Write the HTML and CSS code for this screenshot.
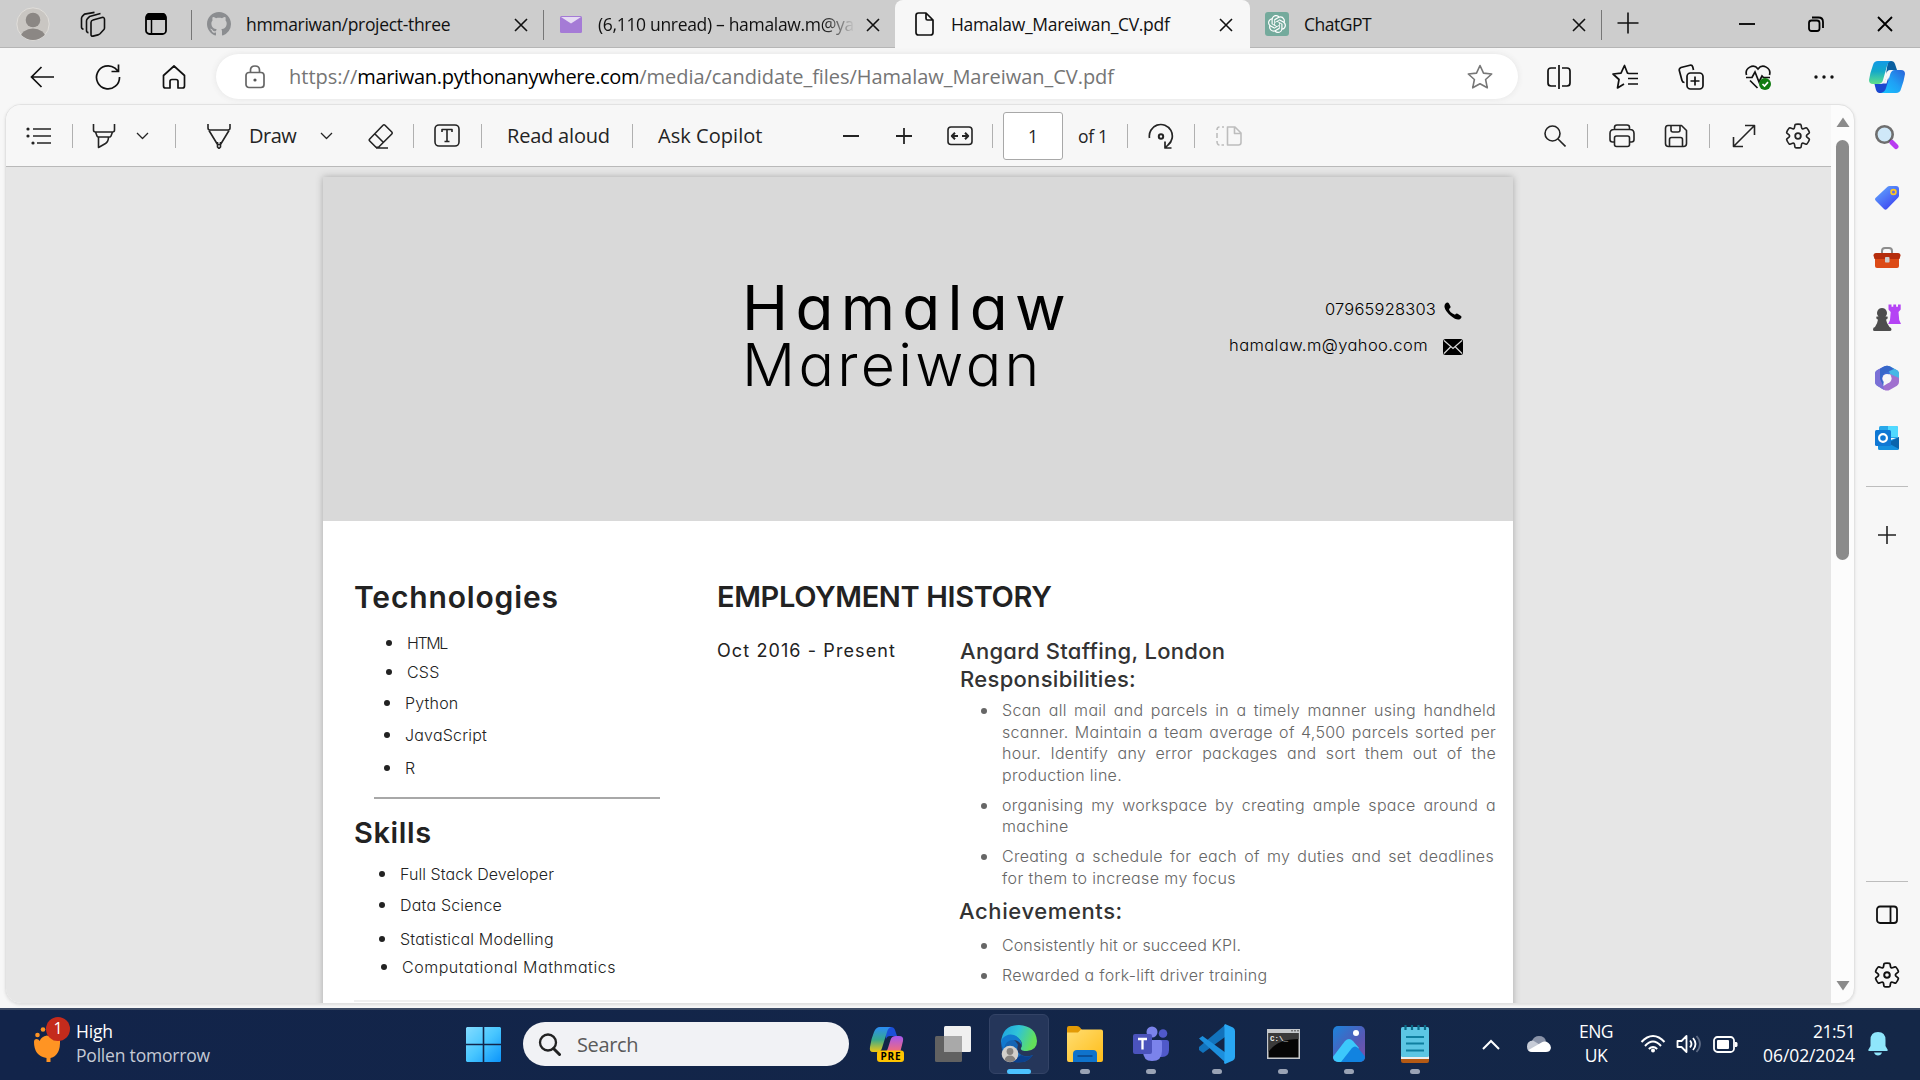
FILE: index.html
```html
<!DOCTYPE html>
<html lang="en">
<head>
<meta charset="utf-8">
<title>Hamalaw_Mareiwan_CV.pdf</title>
<link rel="stylesheet" href="styles.css">
</head>
<body>
<header class="tabstrip">
  <svg class="avatar" width="34" height="34" viewBox="0 0 34 34"><defs><clipPath id="av"><circle cx="17" cy="17" r="16"/></clipPath></defs><circle cx="17" cy="17" r="16.2" fill="#c9c6c2" stroke="#e0deda"/><g clip-path="url(#av)" fill="#8b8784"><circle cx="17" cy="13" r="7.3"/><ellipse cx="17" cy="31" rx="12.5" ry="9.500"/></g></svg>
  <svg class="workspaces" width="26" height="26" viewBox="0 0 26 26" fill="none" stroke="#111" stroke-width="1.6" stroke-linejoin="round"><path d="M13 9l9-2.500q2.500-.5 2.500 2V17q0 1-.8 1.800L20 22.800q-.8.8-2 1.100l-5 1.200q-2 .3-2-1.700V11.500q0-2 2-2.500z"/><path d="M8 21q-2 0-2-2V9.500q0-1.500 1-2.500l2-2 11-3M3 17.500q-2 0-2-2V7q0-1.500 1-2.500l2-2L14 .8" transform="translate(.5 .6)"/></svg>
  <svg class="tabactions" width="22" height="24" viewBox="0 0 22 24"><rect x="1" y="2" width="20" height="20" rx="3.500" fill="none" stroke="#000" stroke-width="1.8"/><path d="M1 8V5q0-4 4-4h12q4 0 4 4v3z"/><path d="M6.500 7v15" stroke="#000" stroke-width="1.5"/></svg>
  <div class="tab tab-sep">
    <span class="tab-icon"><svg width="24" height="24" viewBox="0 0 16 16" fill="#8b8d90"><path d="M8 0C3.580 0 0 3.580 0 8c0 3.540 2.290 6.530 5.470 7.590.4.070.55-.17.55-.38 0-.19-.01-.82-.01-1.490-2.010.37-2.530-.49-2.690-.94-.09-.23-.48-.94-.82-1.130-.28-.15-.68-.52-.01-.53.63-.01 1.080.58 1.230.82.72 1.210 1.870.87 2.330.66.070-.52.28-.87.51-1.070-1.780-.2-3.640-.89-3.640-3.950 0-.87.31-1.590.82-2.150-.08-.2-.36-1.020.08-2.120 0 0 .67-.21 2.200.82.64-.18 1.320-.27 2-.27s1.360.09 2 .27c1.530-1.040 2.200-.82 2.200-.82.44 1.100.16 1.920.08 2.120.51.56.82 1.270.82 2.150 0 3.070-1.870 3.750-3.650 3.950.29.25.54.73.54 1.480 0 1.070-.01 1.930-.01 2.200 0 .21.15.46.55.38A8.010 8.010 0 0 0 16 8c0-4.420-3.580-8-8-8z"/></svg></span>
    <span class="tab-title">hmmariwan/project-three</span>
    <svg class="x" width="14" height="14" viewBox="0 0 14 14"><path d="M1 1l12 12M13 1L1 13"/></svg>
  </div>
  <div class="tab tab-sep">
    <span class="tab-icon"><svg width="22" height="17" viewBox="0 0 22 17"><rect width="22" height="17" rx="1.500" fill="#a57bd6"/><path d="M1 1h20l-10 6.500z" fill="#e6dcf3"/></svg></span>
    <span class="tab-title fade">(6,110 unread) – hamalaw.m@ya</span>
    <svg class="x" width="14" height="14" viewBox="0 0 14 14"><path d="M1 1l12 12M13 1L1 13"/></svg>
  </div>
  <div class="tab tab-active">
    <span class="tab-icon"><svg width="19" height="24" viewBox="0 0 19 24" fill="none" stroke="#111" stroke-width="1.7" stroke-linejoin="round"><path d="M3.500 1H11l7 7v12.500q0 2.500-2.500 2.500h-12Q1 23 1 20.500v-17Q1 1 3.500 1zM11 1v5.500Q11 8 12.500 8H18"/></svg></span>
    <span class="tab-title">Hamalaw_Mareiwan_CV.pdf</span>
    <svg class="x" width="14" height="14" viewBox="0 0 14 14"><path d="M1 1l12 12M13 1L1 13"/></svg>
  </div>
  <div class="tab tab-end">
    <span class="tab-icon"><svg width="24" height="24" viewBox="-4 -4 32 32"><rect x="-4" y="-4" width="32" height="32" rx="4" fill="#74aa9c"/><path fill="#fff" d="M22.2819 9.8211a5.9847 5.9847 0 0 0-.5157-4.9108 6.0462 6.0462 0 0 0-6.5098-2.9A6.0651 6.0651 0 0 0 4.9807 4.1818a5.9847 5.9847 0 0 0-3.9977 2.9 6.0462 6.0462 0 0 0 .7427 7.0966 5.98 5.98 0 0 0 .511 4.9107 6.051 6.051 0 0 0 6.5146 2.9001A5.9847 5.9847 0 0 0 13.2599 24a6.0557 6.0557 0 0 0 5.7718-4.2058 5.9894 5.9894 0 0 0 3.9977-2.9001 6.0557 6.0557 0 0 0-.7475-7.0729zm-9.022 12.6081a4.4755 4.4755 0 0 1-2.8764-1.0408l.1419-.0804 4.7783-2.7582a.7948.7948 0 0 0 .3927-.6813v-6.7369l2.02 1.1686a.071.071 0 0 1 .038.052v5.5826a4.504 4.504 0 0 1-4.4945 4.4944zm-9.6607-4.1254a4.4708 4.4708 0 0 1-.5346-3.0137l.142.0852 4.783 2.7582a.7712.7712 0 0 0 .7806 0l5.8428-3.3685v2.3324a.0804.0804 0 0 1-.0332.0615L9.74 19.9502a4.4992 4.4992 0 0 1-6.1408-1.6464zM2.3408 7.8956a4.485 4.485 0 0 1 2.3655-1.9728V11.6a.7664.7664 0 0 0 .3879.6765l5.8144 3.3543-2.0201 1.1685a.0757.0757 0 0 1-.071 0l-4.8303-2.7865A4.504 4.504 0 0 1 2.3408 7.872zm16.5963 3.8558L13.1038 8.364 15.1192 7.2a.0757.0757 0 0 1 .071 0l4.8303 2.7913a4.4944 4.4944 0 0 1-.6765 8.1042v-5.6772a.79.79 0 0 0-.407-.667zm2.0107-3.0231l-.142-.0852-4.7735-2.7818a.7759.7759 0 0 0-.7854 0L9.409 9.2297V6.8974a.0662.0662 0 0 1 .0284-.0615l4.8303-2.7866a4.4992 4.4992 0 0 1 6.6802 4.66zM8.3065 12.863l-2.02-1.1638a.0804.0804 0 0 1-.038-.0567V6.0742a4.4992 4.4992 0 0 1 7.3757-3.4537l-.142.0805L8.704 5.459a.7948.7948 0 0 0-.3927.6813zm1.0976-2.3654l2.602-1.4998 2.6069 1.4998v2.9994l-2.5974 1.4997-2.6067-1.4997Z"/></svg></span>
    <span class="tab-title chat">ChatGPT</span>
    <svg class="x" width="14" height="14" viewBox="0 0 14 14"><path d="M1 1l12 12M13 1L1 13"/></svg>
  </div>
  <svg class="newtab" width="22" height="22" viewBox="0 0 22 22"><path d="M11 .5v21M.5 11h21" stroke="#111" stroke-width="1.6"/></svg>
  <div class="winbtns">
    <svg width="16" height="16" viewBox="0 0 16 16"><path d="M0 8h16"/></svg>
    <svg width="16" height="16" viewBox="0 0 16 16"><rect x="1" y="4.500" width="10.500" height="10.500" rx="2.500"/><path d="M4 1.500h6.500q4.500 0 4.500 4.500v6"/></svg>
    <svg width="16" height="16" viewBox="0 0 16 16"><path d="M1 1l14 14M15 1L1 15"/></svg>
  </div>
</header>

<nav class="navbar">
  <svg class="nb-back" width="24" height="22" viewBox="0 0 24 22"><path d="M24 11H1.500M11.500 1l-10 10 10 10"/></svg>
  <svg class="nb-reload" width="26" height="26" viewBox="0 0 26 26"><path d="M24.500 13A11.500 11.500 0 1 1 20 4.200L23 7M23.500.5V7.500H16.500"/></svg>
  <svg class="nb-home" width="24" height="24" viewBox="0 0 24 24"><path d="M3.500 23q-2 0-2-2V10.500L12 1l10.500 9.500V21q0 2-2 2H16v-6.500q0-2-2-2h-4q-2 0-2 2V23z" stroke-linejoin="round"/></svg>
  <div class="urlbar">
    <svg class="lock" width="20" height="24" viewBox="0 0 20 24" fill="none" stroke="#666" stroke-width="1.7"><rect x="1" y="7.500" width="18" height="15" rx="3"/><path d="M5.500 7V5q0-4 4.500-4t4.500 4v2"/><circle cx="10" cy="15" r="1.600" fill="#555" stroke="none"/></svg>
    <div class="url"><span class="scheme">https://</span><span class="host">mariwan.pythonanywhere.com</span><span class="path">/media/candidate_files/Hamalaw_Mareiwan_CV.pdf</span></div>
    <svg class="star" width="26" height="26" viewBox="0 0 26 26" fill="none" stroke="#777" stroke-width="1.6" stroke-linejoin="round"><path d="M13 1.500l3.500 7.600 8.200.9-6.100 5.500 1.700 8.300L13 19.700l-7.300 4.100 1.700-8.300L1.300 10l8.200-.9z"/></svg>
  </div>
  <div class="nav-tools">
    <svg width="24" height="24" viewBox="0 0 24 24"><path d="M9 3H4Q1 3 1 6v12q0 3 3 3h5M15 3h5q3 0 3 3v12q0 3-3 3h-5M12 0v24"/></svg>
    <svg width="26" height="26" viewBox="0 0 26 26"><path d="M17 9.500l-1.500-.3L12.500 1.500 9 9.200 1 10l6 5.500L5.500 24l6.500-4M16 9.500h10M16 14.500h10M16 20h10" stroke-linejoin="round"/></svg>
    <svg width="26" height="26" viewBox="0 0 26 26"><rect x="9" y="9" width="16" height="16" rx="3.500"/><path d="M17 12.500v9M12.500 17h9M6.500 18.500q-2 0-2.500-2L1.300 6.500q-.5-2 1.700-3L12 1.200q2-.5 2.700 1.500l.8 3.300"/></svg>
    <svg width="26" height="26" viewBox="0 0 26 26"><path d="M1.500 11C-.5 4 8.500-1 13 5c4.500-6 13.500-1 11.500 6M1 13.500h6l3-5.500 4 10 3-6 1.500 1.500H25M5 16.500l7.500 7.500"/><circle cx="20" cy="20" r="6" fill="#107c10" stroke="none"/><path d="M17.500 20l2 2 3.500-3.800" stroke="#fff"/></svg>
    <svg width="26" height="26" viewBox="0 0 26 26" class="dots"><circle cx="5" cy="13" r="1.700"/><circle cx="13" cy="13" r="1.700"/><circle cx="21" cy="13" r="1.700"/></svg>
  </div>
  <svg class="copilot" width="36" height="34" viewBox="0 0 36 34"><defs><linearGradient id="c1" x1="0" y1="0" x2="0" y2="1"><stop offset="0" stop-color="#1299e6"/><stop offset=".45" stop-color="#14a9c9"/><stop offset="1" stop-color="#5fe08a"/></linearGradient><linearGradient id="c2" x1="1" y1="0" x2="0" y2="1"><stop offset="0" stop-color="#2a62d8"/><stop offset=".5" stop-color="#1fa0f5"/><stop offset="1" stop-color="#18c4ff"/></linearGradient></defs><path d="M19 1h3q3 0 4 3l2 6h-6q-4 0-5 4z" fill="#0a5fa0"/><path d="M10 33q-2 0-3-3l-1.500-6h6q4 0 5-4l2-5 2 8-3 10z" fill="#1b49d0"/><path d="M9 1h13q-3 1-4 5l-4 14q-1 4-5 4H4q-4 0-4-4 1-7 4-15 1-4 5-4z" fill="url(#c1)"/><path d="M27 33H12q4-1 5-5l4-13q1-5 5-5h6q4 0 4 4-1 7-4 15-1 4-5 4z" fill="url(#c2)"/><path d="M19.500 10.500h3.500q-2 1.500-3 4.500l-2.500 8.500H14q1.500-1 2.200-3.500z" fill="#f7f7f7"/></svg>
</nav>

<main class="main">
  <section class="viewer">
    <div class="doc">
      <div class="toolbar">
        <svg class="t-list" width="26" height="20" viewBox="0 0 26 20"><path d="M7 3h18M7 10h18M11 17h14"/><g fill="#222" stroke="none"><circle cx="2" cy="3" r="1.600"/><circle cx="2" cy="10" r="1.600"/><circle cx="7" cy="17" r="1.600"/></g></svg>
        <i></i>
        <svg class="t-high" width="24" height="26" viewBox="0 0 24 26"><path d="M1.500 1v6q0 2 2 2h17q2 0 2-2V1M3.500 9l1.500 4q.4 1 1.500 1h11q1.100 0 1.500-1l1.500-4M6.500 14v10.500l7-4q3-2 3-6.500"/></svg>
        <svg class="t-chev" width="13" height="8" viewBox="0 0 13 8"><path d="M1 1l5.500 5.500L12 1"/></svg>
        <i></i>
        <svg class="t-pen" width="26" height="26" viewBox="0 0 26 26"><path d="M2 1v4q0 2 2 2h18q2 0 2-2V1M3 7.500l8.500 14h3L23 7.500M11.500 19v5l1.500 1.500 1.500-1.500v-5"/></svg>
        <span class="t-draw">Draw</span>
        <svg class="t-chev2" width="13" height="8" viewBox="0 0 13 8"><path d="M1 1l5.500 5.500L12 1"/></svg>
        <svg class="t-erase" width="26" height="26" viewBox="0 0 26 26"><path d="M15 2.200q1-1 2 0l6.800 6.800q1 1 0 2L10.500 24.300H8L1.700 18q-1-1 0-2zM6.500 10.500l9 9M8 25h12"/></svg>
        <i></i>
        <svg class="t-text" width="26" height="24" viewBox="0 0 26 24"><rect x="1" y="1" width="24" height="21" rx="4"/><path d="M8 8V5.500h10V8M13 5.500v12M10.500 17.500h5"/></svg>
        <i></i>
        <span class="t-read">Read aloud</span>
        <i></i>
        <span class="t-ask">Ask Copilot</span>
        <svg class="t-minus" width="18" height="18" viewBox="0 0 18 18"><path d="M1 9h16"/></svg>
        <svg class="t-plus" width="18" height="18" viewBox="0 0 18 18"><path d="M1 9h16M9 1v16"/></svg>
        <svg class="t-fit" width="26" height="20" viewBox="0 0 26 20"><rect x="1" y="1" width="24" height="17.500" rx="3"/><path d="M11 10H5M8 6.800L4.800 10 8 13.200M15 10h6M18 6.800l3.200 3.200-3.200 3.200" stroke-width="2"/></svg>
        <i></i>
        <span class="t-page">1</span>
        <span class="t-of">of 1</span>
        <i></i>
        <svg class="t-rot" width="26" height="26" viewBox="0 0 26 26"><path d="M1.500 15A11.500 11.500 0 1 1 20 22l-2.500 2.500M17 18.500v6.500h6.500" stroke-width="1.700"/><circle cx="13" cy="13.500" r="2.200" stroke-width="2"/></svg>
        <i></i>
        <svg class="t-two" width="26" height="20" viewBox="0 0 26 20"><path d="M11.500 1h7.500l6 6v9.500q0 2.500-2.500 2.500h-11zM18.500 1v6.500H25M8 1H6M3.500 1Q1 1 1 4M1 7v5M1 15q0 4 2.500 4M5.500 19H8"/></svg>
        <svg class="t-find" width="22" height="22" viewBox="0 0 22 22"><circle cx="8.500" cy="8.500" r="7.500"/><path d="M14 14l7.500 7.500"/></svg>
        <i></i>
        <svg class="t-print" width="26" height="24" viewBox="0 0 26 24"><path d="M5.500 5.500V3.500Q5.500 1 8 1h10q2.500 0 2.500 2.500v2M5.500 18h-2Q1 18 1 15.500V9.500q0-4 4-4h16q4 0 4 4v6q0 2.500-2.500 2.500h-2"/><rect x="5.500" y="12" width="15" height="10.500" rx="2"/></svg>
        <svg class="t-save" width="24" height="24" viewBox="0 0 24 24"><path d="M4 1.500h13.500l5 5V19.500q0 3-3 3h-15q-3 0-3-3V4.500q0-3 2.500-3zM7 1.500V6q0 2 2 2h5q2 0 2-2V1.500M5.500 22.500V15.500q0-2 2-2h9q2 0 2 2v7"/></svg>
        <i></i>
        <svg class="t-exp" width="24" height="24" viewBox="0 0 24 24"><path d="M2 22L22 2M13 1.500h9.500V11M1.500 13v9.500H11"/></svg>
        <svg class="t-gear" width="28" height="28" viewBox="0 0 20 20"><path stroke-width="1.150" d="M1.910 7.380A8.500 8.500 0 0 1 3.700 4.300a.5.5 0 0 1 .54-.13l1.920.68a1 1 0 0 0 1.320-.76l.36-2a.5.5 0 0 1 .4-.4 8.530 8.530 0 0 1 3.550 0c.2.040.35.2.38.4l.37 2a1 1 0 0 0 1.320.76l1.920-.68a.5.5 0 0 1 .54.13 8.500 8.500 0 0 1 1.780 3.080c.06.2 0 .4-.15.54l-1.560 1.320a1 1 0 0 0 0 1.520l1.560 1.320a.5.5 0 0 1 .15.54 8.500 8.500 0 0 1-1.780 3.080.5.5 0 0 1-.54.13l-1.920-.68a1 1 0 0 0-1.320.76l-.37 2a.5.5 0 0 1-.38.4 8.530 8.530 0 0 1-3.560 0 .5.5 0 0 1-.39-.4l-.36-2a1 1 0 0 0-1.320-.76l-1.920.68a.5.5 0 0 1-.54-.13 8.500 8.500 0 0 1-1.780-3.080.5.5 0 0 1 .15-.54l1.560-1.320a1 1 0 0 0 0-1.520L2.060 7.920a.5.5 0 0 1-.15-.54Z"/><circle cx="10" cy="10" r="2" stroke-width="1.300"/></svg>
      </div>
      <div class="canvas">
        <article class="page">
          <header class="cv-head">
            <div class="cv-name"><div class="first">Hamalaw</div><div class="last">Mareiwan</div></div>
            <div class="cv-contact">
              <div class="contact"><span class="phone">07965928303</span><svg width="20" height="18" viewBox="0 0 20 18"><path d="M2.500 1.500q2-2 3.500 0l1.500 3q.5 1.500-1.500 2.500.5 3.500 6 5.700 1.500-1.700 3-.8l3 2q1.300 1.200-.8 3Q14 19 8 14T1.500 5q-.2-2.500 1-3.500z"/></svg></div>
              <div class="contact"><span class="email">hamalaw.m@yahoo.com</span><svg width="20" height="16" viewBox="0 0 20 16"><rect width="20" height="16" rx="2.500"/><path d="M1 1.500l9 8 9-8M1 14.500L7.500 8M19 14.500L12.500 8" fill="none" stroke="#d9d9d9" stroke-width="1.200"/></svg></div>
            </div>
          </header>
          <div class="cv-body">
            <aside class="cv-left">
              <h2 class="h-tech">Technologies</h2>
              <ul class="tech">
                <li class="in s-html">HTML</li><li class="in">CSS</li><li>Python</li><li class="s-js">JavaScript</li><li>R</li>
              </ul>
              <hr>
              <h2 class="h-skills">Skills</h2>
              <ul class="skills">
                <li>Full Stack Developer</li><li class="s-data">Data Science</li><li class="s-data">Statistical Modelling</li><li class="in s-comp">Computational Mathmatics</li>
              </ul>
              <hr class="faint">
            </aside>
            <section class="cv-right">
              <h2 class="h-emp">EMPLOYMENT HISTORY</h2>
              <div class="job">
                <div class="dates">Oct 2016 - Present</div>
                <div class="detail">
                  <h3>Angard Staffing, London<br>Responsibilities:</h3>
                  <ul>
                    <li><p>Scan all mail and parcels in a timely manner using handheld</p><p>scanner. Maintain a team average of 4,500 parcels sorted per</p><p>hour. Identify any error packages and sort them out of the</p><p class="end">production line.</p></li>
                    <li><p>organising my workspace by creating ample space around a</p><p class="end">machine</p></li>
                    <li class="short"><p>Creating a schedule for each of my duties and set deadlines</p><p class="end">for them to increase my focus</p></li>
                  </ul>
                  <h3 class="ach">Achievements:</h3>
                  <ul class="ach-list">
                    <li><p class="end kpi">Consistently hit or succeed KPI.</p></li>
                    <li><p class="end">Rewarded a fork-lift driver training</p></li>
                  </ul>
                </div>
              </div>
            </section>
          </div>
        </article>
      </div>
    </div>
    <div class="scrollbar">
      <svg width="14" height="11" viewBox="0 0 14 11"><path d="M7 0.500L13.500 10H.5z"/></svg>
      <div class="thumb"></div>
      <svg class="down" width="14" height="11" viewBox="0 0 14 11"><path d="M7 10.500L.5 1h13z"/></svg>
    </div>
  </section>
  <aside class="sidebar">
    <div class="slot s-find"><svg width="26" height="26" viewBox="0 0 26 26"><circle cx="10.500" cy="10.500" r="8.200" fill="#cfe8f8" stroke="#6e6e6e" stroke-width="2.600"/><path d="M15.500 16l3 3" stroke="#555" stroke-width="2.500"/><path d="M18 18.500l4 4" stroke="#b83bf0" stroke-width="5" stroke-linecap="round"/></svg></div>
    <div class="slot"><svg width="26" height="26" viewBox="0 0 26 26"><defs><linearGradient id="tg" x1="0" y1="0" x2=".8" y2="1"><stop offset="0" stop-color="#64b0ff"/><stop offset="1" stop-color="#3b3ef0"/></linearGradient></defs><path d="M13.500 1.800Q14.300 1 15.500 1H22q3 0 3 3v6.500q0 1.200-.8 2L13 24q-1.500 1.500-3 0L2 16q-2-2 0-3.500z" fill="url(#tg)"/><circle cx="19.500" cy="7" r="2.400" fill="#6a6ae0" stroke="#ffc81e" stroke-width="1.700"/></svg></div>
    <div class="slot"><svg width="28" height="24" viewBox="0 0 28 24"><path d="M9 8V5q0-3 3-3h4q3 0 3 3v3" fill="none" stroke="#8d8d8d" stroke-width="2"/><path d="M2 9h24v11q0 2-2 2H4q-2 0-2-2z" fill="#dc4a16"/><path d="M3 7h22q2.500 0 2.500 2.500L26.500 13h-25L.5 9.500Q.5 7 3 7z" fill="#b52d0c"/><rect x="12" y="11" width="4.500" height="5.500" rx=".8" fill="#cdcdcd"/></svg></div>
    <div class="slot"><svg width="28" height="28" viewBox="0 0 28 28"><path d="M15.500.5h3v2.200h1.800V.5h2.800v2.200H25V.5h2.700v5L25.500 8l.7 8 1.800 4H15.200l1.800-4 .7-8-2.200-2.500z" fill="#b543f5"/><path d="M9 4a5 5 0 0 1 3.500 8.500h2q.8 2.500-1.500 3 .5 4 3.500 7.500 2 .5 2 2.500 0 1.500-2 1.500h-15Q0 27 0 25.500 0 23 2 23q2.500-3.500 3-7.500-2.300-.5-1.500-3h2A5 5 0 0 1 9 4z" fill="#4d4d4d"/></svg></div>
    <div class="slot"><svg width="26" height="27" viewBox="0 0 26 27"><path d="M10 1.500q3-1.700 6 0L23 5.300q2 1.200 2 3.500V14l-9-5-5.500 4-2 10.500L3 20.500Q1 19 1 16.500V9q0-2.500 2-3.700z" fill="#3f6fd6"/><path d="M16 9l-2.500-7.800Q15 1 16 1.500l7 3.800q2 1.200 2 3.500V14z" fill="#45b7e6"/><path d="M25 13v4q0 2.500-2 3.700l-7 4q-3 1.800-6 0l-3.500-2L16 17l1-4.500-1-3.500z" fill="#a070cf"/><path d="M3 5.300L9 2l2 6-2.500 9L10 25l-7-4.300q-2-1.200-2-3.700V9q0-2.500 2-3.700z" fill="#7b70d6"/><path d="M10 1.500q3-1.700 6 0L20 4l-9 4-3 5 1.500 8L6 14V4z" fill="#3767c9"/><circle cx="13" cy="13.500" r="4.600" fill="#f7f7f7"/></svg></div>
    <div class="slot"><svg width="26" height="26" viewBox="0 0 26 26"><rect x="5" y="1" width="19" height="12" rx="1.500" fill="#28a8ea"/><path d="M14 1h8.500Q24 1 24 2.500V12H14z" fill="#50d9ff"/><path d="M4 12l10 4 11-4v11.500q0 1.500-1.500 1.500h-18Q4 25 4 23.500z" fill="#1490df"/><path d="M25 12L14 18l11 6z" fill="#0a64ad"/><rect x="1" y="5" width="16" height="16" rx="1.500" fill="#0f78d4"/><circle cx="9" cy="13" r="3.900" fill="none" stroke="#fff" stroke-width="2.200"/></svg></div>
    <div class="rule r1"></div>
    <div class="slot"><svg width="18" height="18" viewBox="0 0 18 18"><path d="M9 0v18M0 9h18" stroke="#222" stroke-width="1.600"/></svg></div>
    <div class="rule r2"></div>
    <div class="slot"><svg width="22" height="20" viewBox="0 0 22 20" fill="none" stroke="#111" stroke-width="1.800"><rect x="1" y="1.500" width="20" height="16.500" rx="3"/><path d="M14.500 1.500V18"/></svg></div>
    <div class="slot"><svg width="28" height="28" viewBox="0 0 20 20" fill="none" stroke="#111"><path stroke-width="1.250" d="M1.910 7.380A8.500 8.500 0 0 1 3.700 4.300a.5.5 0 0 1 .54-.13l1.920.68a1 1 0 0 0 1.320-.76l.36-2a.5.5 0 0 1 .4-.4 8.530 8.530 0 0 1 3.550 0c.2.040.35.2.38.4l.37 2a1 1 0 0 0 1.320.76l1.920-.68a.5.5 0 0 1 .54.13 8.500 8.500 0 0 1 1.780 3.080c.06.2 0 .4-.15.54l-1.560 1.320a1 1 0 0 0 0 1.520l1.560 1.320a.5.5 0 0 1 .15.54 8.500 8.500 0 0 1-1.780 3.080.5.5 0 0 1-.54.13l-1.920-.68a1 1 0 0 0-1.320.76l-.37 2a.5.5 0 0 1-.38.4 8.530 8.530 0 0 1-3.560 0 .5.5 0 0 1-.39-.4l-.36-2a1 1 0 0 0-1.320-.76l-1.920.68a.5.5 0 0 1-.54-.13 8.500 8.500 0 0 1-1.780-3.080.5.5 0 0 1 .15-.54l1.560-1.320a1 1 0 0 0 0-1.520L2.060 7.920a.5.5 0 0 1-.15-.54Z"/><circle cx="10" cy="10" r="2" stroke-width="1.400"/></svg></div>
  </aside>
</main>

<footer class="taskbar">
  <div class="weather">
    <svg width="40" height="46" viewBox="0 0 40 46"><g fill="#ff9423"><circle cx="4.500" cy="16" r="2.300"/><circle cx="10" cy="10.500" r="2.300"/><path d="M1 23q0-3 2.500-3 2 0 3.200 2 1.300-4.500 7.300-5.500 5 1 7 5 2-3 6-1 .8 16-9.500 18.500V43h-4v-4Q1 37 1 23z"/></g></svg>
    <span class="badge">1</span>
    <div class="wtext"><div>High</div><div class="sub">Pollen tomorrow</div></div>
  </div>
  <svg class="start" width="35" height="35" viewBox="0 0 35 35"><defs><linearGradient id="wn" x1="0" y1="0" x2="1" y2="1"><stop offset="0" stop-color="#84dcff"/><stop offset=".5" stop-color="#48c6ff"/><stop offset="1" stop-color="#0b94fb"/></linearGradient></defs><path d="M1 0h15.700v16.700H0V1zM18.300 0H34l1 1v15.700H18.300zM0 18.300h16.700V35H1l-1-1zM18.300 18.300H35V34l-1 1H18.300z" fill="url(#wn)"/></svg>
  <div class="search"><svg width="23" height="23" viewBox="0 0 23 23" fill="none" stroke="#222"><circle cx="10" cy="9.500" r="8" stroke-width="2.300"/><path d="M15.500 15.500l6 6" stroke-width="3" stroke-linecap="round"/></svg><span>Search</span></div>
  <div class="apps">
    <div class="app"><svg width="36" height="36" viewBox="0 0 36 36"><defs><linearGradient id="p1" x1="0" y1="0" x2="0" y2="1"><stop offset="0" stop-color="#2b8cf5"/><stop offset=".5" stop-color="#37a98e"/><stop offset="1" stop-color="#f2c811"/></linearGradient><linearGradient id="p2" x1="0" y1="0" x2="0" y2="1"><stop offset="0" stop-color="#a557f0"/><stop offset="1" stop-color="#fb6f6c"/></linearGradient></defs><path d="M15 1h7q3 0 4 3l2 6h-7q-3 0-4 3z" fill="#1b50d8"/><path d="M27 10h3q5 0 4 5l-3 12H14q4-1 5-5l2.500-8q1-4 5.500-4z" fill="url(#p2)"/><path d="M11 1h11q-3 1-4 5l-5 16q-1 4-5 4H4q-4 0-3-5 1-8 4-15 2-5 6-5z" fill="url(#p1)"/><rect x="8" y="24.500" width="27" height="11.500" rx="3" fill="#ffc400"/><text x="21.500" y="34" text-anchor="middle" font-family="Open Sans" font-weight="700" font-size="10" textLength="20">PRE</text></svg></div>
    <div class="app"><svg width="36" height="36" viewBox="0 0 36 36"><rect y="10" width="27" height="26" rx="1.500" fill="#616161"/><rect x="9" y="0" width="27" height="26" rx="1.500" fill="#f0f0f0"/><path d="M9 10h18v16H9z" fill="#a9a9a9"/></svg></div>
    <div class="app active"><svg width="36" height="38" viewBox="0 0 36 38"><defs><linearGradient id="e1" x1="0" y1="0" x2="1" y2=".3"><stop offset="0" stop-color="#1c9fe0"/><stop offset=".5" stop-color="#2fc3d8"/><stop offset="1" stop-color="#63e05a"/></linearGradient></defs><path d="M0 18Q1 34 14 37q12 2 18-7-8 3-13-1-4-3-2-9-4-8-11-7-5 1-6 5z" fill="#1464b4"/><path d="M20 30q6 3 12 0-6 9-18 7-5-1-8-5 9 3 14-2z" fill="#0c418e"/><path d="M0 18Q1 0 18 0q17 1 18 16 0 9-10 10-7 0-6-3 2-3 0-7-4-6-11-5-6 1-9 7z" fill="url(#e1)"/><path d="M1 14q5-6 12-4 8 3 8 12-1-6-8-7-9 0-10 9Q-1 19 1 14z" fill="#1279cf"/><circle cx="9" cy="29" r="8.300" fill="#d3cfcb"/><circle cx="9" cy="26.500" r="3.400" fill="#86827f"/><path d="M3.500 35q1-4.500 5.500-4.500t5.500 4.500q-5.500 4-11 0z" fill="#86827f"/></svg></div>
    <div class="app"><svg width="36" height="36" viewBox="0 0 36 36"><defs><linearGradient id="f1" x1="0" y1="0" x2="1" y2="1"><stop offset="0" stop-color="#ffdd72"/><stop offset="1" stop-color="#ffbd18"/></linearGradient></defs><path d="M0 2q0-2 2-2h8q2 0 3 1.500L15 4v6H0z" fill="#e39a05"/><path d="M0 6.500h11l3-3h20q2 0 2 2V34q0 2-2 2H2q-2 0-2-2z" fill="url(#f1)"/><path d="M6 36v-8q0-4 4-4h16q4 0 4 4v8z" fill="#0f73cc"/><path d="M10.500 30h15" stroke="#0b4c93" stroke-width="1.800"/></svg><b></b></div>
    <div class="app"><svg width="36" height="36" viewBox="0 0 36 36"><circle cx="19" cy="6" r="5.500" fill="#7b83eb"/><circle cx="30" cy="7.500" r="4.300" fill="#5059c9"/><path d="M24 14h9.500q2.500 0 2.500 2.500V24q0 7-7 7h-5z" fill="#5059c9"/><path d="M10 14h17q2 0 2 2v9q0 10-10 10-9 0-9-10z" fill="#7b83eb"/><rect x="0" y="8" width="19" height="20" rx="2" fill="#4b53bc"/><path d="M5 13h9M9.500 13v10.500" stroke="#fff" stroke-width="2.300"/></svg><b></b></div>
    <div class="app"><svg width="36" height="40" viewBox="0 0 36 40"><path d="M26 1L8.500 18.500 3 14 0 16v3l27 20z" fill="none"/><path d="M26 1v12L4 29l-4-3v-3z" fill="#1272bb"/><path d="M0 14.500L3.500 12 27 29v10z" fill="#1c8fdd"/><path d="M26 0l8 3.500Q36 4.500 36 7v26q0 2.500-2 3.500L26 40q-1.500-1-.5-4V4q-1-3 .5-4z" fill="#29a7f3"/></svg><b></b></div>
    <div class="app"><svg width="33" height="30" viewBox="0 0 33 30"><rect width="33" height="30" fill="#c5c8cb"/><path d="M1.500 4h30v24.500h-30z" fill="#050505"/><path d="M1.500 4h30v6Q10 10 1.500 23z" fill="#3a3a3a"/><text x="3" y="12" font-family="Liberation Mono" font-weight="700" font-size="7.500" fill="#eee">C:\_</text><path d="M24 1.800h2M27 1.800h2M30 1.800h2" stroke="#555"/></svg><b></b></div>
    <div class="app"><svg width="32" height="36" viewBox="0 0 32 36"><defs><linearGradient id="g1" x1="0" y1="0" x2="1" y2="1"><stop offset="0" stop-color="#1b84dc"/><stop offset=".6" stop-color="#5559b5"/><stop offset="1" stop-color="#7f50a8"/></linearGradient><clipPath id="gc"><rect width="32" height="36" rx="5"/></clipPath></defs><g clip-path="url(#gc)"><rect width="32" height="36" fill="url(#g1)"/><path d="M-1 32l13-17q4-4 8 0l6 7-15 14H0z" fill="#3cc8fb"/><path d="M8 36l11-14q3-3 6 0l9 11v5H7z" fill="#1183e0"/></g><circle cx="23" cy="7" r="3" fill="#fff"/></svg><b></b></div>
    <div class="app"><svg width="28" height="38" viewBox="0 0 28 38"><path d="M0 30h28v6q0 2-2 2H2q-2 0-2-2z" fill="#b55a14"/><path d="M0 29h28v5H0z" fill="#eee"/><rect y="2" width="28" height="30" rx="1.500" fill="#5cc6e4"/><path d="M4.500 0v5M11 0v5M17.500 0v5M24 0v5" stroke="#0b6a86" stroke-width="2.200"/><path d="M5 12h18M5 18.500h18M5 25.500h18" stroke="#0f7fa0" stroke-width="2"/></svg><b></b></div>
  </div>
  <div class="tray">
    <div class="tslot wide"><svg width="18" height="11" viewBox="0 0 18 11" fill="none" stroke="#fff" stroke-width="2"><path d="M1 10l8-8 8 8"/></svg></div>
    <div class="tslot wide"><svg width="24" height="17" viewBox="0 0 24 17"><path d="M5 5q2-5 7-5 6 0 7 5.500L11 12z" fill="#8a93a8"/><path d="M5 16q-5 0-5-5.500Q0 5 6 4.500l14 8.500-4 3z" fill="#c6cbd6"/><path d="M5 16q-2 0-3.500-2l13-7.500q3.500-2 7 .5 3 2.500 2.300 5.500Q23 16 19 16z" fill="#fff"/></svg></div>
    <div class="lang"><div>ENG</div><div>UK</div></div>
    <div class="tslot"><svg width="26" height="20" viewBox="0 0 26 20" fill="none" stroke="#fff" stroke-width="2"><path d="M1.500 8Q7 2 13 2t11.500 6M5 12Q9 7.500 13 7.500t8 4.500M8.800 15Q11 13 13 13t4.200 2"/><circle cx="13" cy="16.500" r="2" fill="#fff" stroke="none"/></svg></div>
    <div class="tslot"><svg width="26" height="20" viewBox="0 0 26 20" fill="none" stroke="#fff" stroke-width="1.800"><path d="M1.500 7h4L10.500 2v16l-5-5h-4z" stroke-linejoin="round"/><path d="M14 6.500q3 3.500 0 7M17 4q5 6 0 12"/><path d="M20.500 2q7 8 0 16" stroke="#5d6a84"/></svg></div>
    <div class="tslot"><svg width="25" height="17" viewBox="0 0 25 17"><rect x="1" y="1" width="20" height="15" rx="3.500" fill="none" stroke="#fff" stroke-width="1.800"/><rect x="4" y="4" width="12" height="9" rx="1" fill="#fff"/><path d="M22 6h1.500l1 1v3l-1 1H22z" fill="#fff"/></svg></div>
    <div class="clock"><div>21:51</div><div class="date">06/02/2024</div></div>
    <svg class="bell" width="20" height="24" viewBox="0 0 20 24" fill="#8fe6fb"><path d="M10 0q7.500 0 7.500 8v6l2.300 4q0 1-1 1H1.200q-1 0-1-1l2.300-4V8Q2.500 0 10 0zM6 20.500h8Q13 23.500 10 23.500T6 20.500z"/></svg>
  </div>
</footer>
</body>
</html>
```
FILE: styles.css
```css
*{box-sizing:border-box}
body{margin:0;width:1920px;height:1080px;overflow:hidden;background:#f7f7f7;font-family:"Open Sans","Noto Sans",sans-serif;color:#111;display:flex;flex-direction:column}
svg{display:block;flex:none}
h2,h3,ul,p{margin:0;padding:0}

/* tab strip */
.tabstrip{height:48px;flex:none;background:#cdcdcd;box-shadow:inset 0 -1px #b5b5b5;display:flex;align-items:center;padding-left:16px}
.workspaces{margin-left:30px}
.tabactions{margin-left:39px}
.tab{width:353px;height:48px;display:flex;align-items:center;padding-left:16px;flex:none}
.tabactions + .tab{margin-left:24px}
.tab-sep{width:352px;background:linear-gradient(#777,#777) 0 10px/1px 30px no-repeat}
.tab-active{width:355px;padding-left:17px;background:#f7f7f7;border-radius:8px 8px 0 0}
.tab-icon{width:24px;height:24px;display:flex;align-items:center;justify-content:center;margin-right:15px;flex:none}
.tab-title{width:269px;font-size:17.5px;line-height:46px;letter-spacing:-.32px;white-space:nowrap;margin-top:-1px}
.fade{width:257px;margin-right:12px;-webkit-mask-image:linear-gradient(90deg,#000 225px,transparent 257px);mask-image:linear-gradient(90deg,#000 225px,transparent 257px)}
.chat{letter-spacing:-.5px}
.x{fill:none;stroke:#111;stroke-width:1.6;margin:1px 0 0 -1px}
.tab-end{width:352px;padding-left:15px;background:linear-gradient(#777,#777) 100% 10px/1px 30px no-repeat}
.newtab{margin-left:15px;margin-top:-2px}
.winbtns{margin-left:100px;display:flex;gap:53px;fill:none;stroke:#000;stroke-width:1.8}

/* navigation bar */
.navbar{height:56px;flex:none;display:flex;align-items:center;padding:1px 0 0 30px;fill:none}
.navbar > svg,.nav-tools svg{fill:none;stroke:#111;stroke-width:1.7}
.navbar > .copilot{stroke:none}
.nb-reload{margin-left:41px}
.nb-home{margin-left:41px}
.urlbar{margin-left:30px;width:1302px;height:45px;border-radius:23px;background:#fff;box-shadow:0 0 6px #e4e4e4;display:flex;align-items:center;padding:0 25px 0 29px}
.url{margin-left:24px;flex:1;font-size:20px;line-height:43px;color:#757575;white-space:nowrap}
.host{color:#000;letter-spacing:-.31px}
.path{letter-spacing:-.04px}
.nav-tools{margin-left:29px;display:flex;gap:40.5px;align-items:center}
.nav-tools .dots{fill:#111;stroke:none}
.copilot{margin-left:32px}

/* viewer */
.main{height:904px;flex:none;display:flex}
.viewer{margin-left:5px;width:1850px;height:900px;display:flex;border:1px solid #e2e2e2;border-radius:16px;overflow:hidden;background:#fcfcfc;box-shadow:0 1px 3px #ddd}
.doc{width:1825px;flex:none}
.toolbar{height:62px;background:#f7f7f7;border-bottom:1px solid #b9b9b9;display:flex;align-items:center;padding-left:20px;font-size:20px;color:#242424;white-space:nowrap}
.toolbar svg{fill:none;stroke:#242424;stroke-width:1.6;stroke-linejoin:round}
.toolbar span{line-height:58px}
.toolbar i{width:1px;height:24px;background:#b0b0b0;flex:none}
.toolbar .t-list{margin-right:20px}
.t-high{margin-left:19px}
.toolbar .t-chev,.toolbar .t-chev2{stroke-width:1.25}
.t-chev{margin-left:20px;margin-right:26px}
.t-pen{margin-left:30px}
.t-draw{margin-left:17px;width:54px;letter-spacing:-.5px}
.t-chev2{margin-left:17px}
.t-erase{margin-left:35px;margin-right:19px}
.t-text{margin-left:20px;margin-right:21px}
.t-read{margin-left:25px;width:125px;letter-spacing:-.2px}
.t-ask{margin-left:25px;width:105px;letter-spacing:.05px}
.toolbar .t-minus{margin-left:79px;stroke-width:1.8}
.toolbar .t-plus{margin-left:35px;stroke-width:1.8}
.t-fit{margin-left:34px;margin-right:19px}
.toolbar .t-page{margin-left:10px;width:60px;height:48px;line-height:47px;border:1px solid #a8a8a8;border-radius:3px;background:#fff;text-align:center;font-size:17.5px}
.t-of{margin-left:15px;width:49px;font-size:17.5px;letter-spacing:-.3px}
.t-rot{margin-left:20px;margin-right:20px}
.toolbar .t-two{margin-left:21px;stroke:#bdbdbd}
.t-find{margin-left:302px;margin-right:21px}
.t-print{margin-left:21px}
.t-save{margin-left:29px;margin-right:21px}
.t-exp{margin-left:22px}
.t-gear{margin-left:28px}
.canvas{height:836px;background:#e6e6e6;padding:10px 0 0 317px;overflow:hidden}
.page{width:1190px;height:1684px;background:#fff;box-shadow:0 0 7px #a9a9a9}

/* scrollbar */
.scrollbar{width:23px;padding:12px 0 12px 5px;display:flex;flex-direction:column;align-items:flex-start;fill:#8b8b8b}
.thumb{width:13px;height:420px;margin-top:12px;border-radius:7px;background:#8b8b8b}
.down{margin-top:auto}

/* sidebar */
.sidebar{width:63px;padding:4px 0 3px;display:flex;flex-direction:column;align-items:center}
.slot{width:60px;height:60px;display:flex;align-items:center;justify-content:center;flex:none}
.s-find{padding-bottom:2px}
.rule{width:42px;height:1px;background:#bdbdbd;flex:none}
.r1{margin:18px 0}
.r2{margin-top:auto;margin-bottom:3px}

/* CV */
.page{font-family:Inter,sans-serif;font-feature-settings:"cv11"}
.cv-head{height:344px;background:#d9d9d9;display:flex;color:#000}
.cv-name{margin-left:419px;padding-top:102px;width:420px;white-space:nowrap}
.first{font-size:62px;line-height:58px;letter-spacing:7.3px}
.last{font-size:59px;line-height:55px;font-weight:300;letter-spacing:3.3px}
.cv-contact{width:305px;padding-top:121px;margin-left:-4px}
.contact{display:flex;align-items:center;justify-content:flex-end;height:22px;margin-bottom:14px;font-size:16.5px;line-height:22px;font-weight:300}
.contact .phone{margin-right:7px;letter-spacing:.19px}
.contact .email{margin-right:15px;letter-spacing:.41px}
.contact svg{margin-top:4px}
.cv-body{display:flex}
.cv-left{width:394px;padding-left:31px;color:#222}
h2{font-size:29px;line-height:36px;font-weight:600;color:#222;white-space:nowrap}
.h-tech{margin-top:58px;font-size:30px;letter-spacing:.85px}
.cv-left ul{list-style:none;font-size:16px;font-weight:300;letter-spacing:.2px}
.cv-left li{display:flex;align-items:center;height:22px;line-height:22px;white-space:nowrap}
.cv-left li::before,.detail li::before{content:"";width:6px;height:6px;border-radius:3px;background:currentColor;flex:none}
.cv-left li::before{margin-right:15px}
.tech{padding:17px 0 0 30px}
.tech .in{padding-left:2px}
.tech li:nth-child(2){margin-top:7px}
.tech li:nth-child(3){margin-top:9px}
.tech li:nth-child(4){margin-top:10px}
.tech li:nth-child(5){margin-top:11px}
.cv-left .s-html{letter-spacing:-1.4px}
.cv-left hr{border:0;height:2px;width:286px;background:#a8a8a8;margin:18px 0 0 20px}
.h-skills{margin-top:16px;letter-spacing:.6px}
.skills{padding:12px 0 0 25px}
.skills li:first-child{letter-spacing:.06px}
.skills li:nth-child(2){margin-top:9px}
.skills li:nth-child(3){margin-top:12px}
.skills li:nth-child(4){margin-top:6px;padding-left:2px}
.cv-left .s-comp{letter-spacing:.53px}
.cv-left hr.faint{margin:22px 0 0 0;background:#f0f0f0}
.cv-right{flex:1;color:#333}
.h-emp{margin-top:58px;letter-spacing:-.36px}
.job{display:flex;margin-top:18px}
.dates{width:243px;font-size:18px;line-height:24px;padding-top:6px;letter-spacing:1.1px;color:#222}
h3{font-size:22px;line-height:28px;font-weight:500;letter-spacing:.3px;color:#333;white-space:nowrap}
.detail{width:536px;padding-top:4px}
.detail ul{list-style:none;font-size:16px;font-weight:300;line-height:21.5px;color:#666;padding:7px 0 0 21px}
.detail li{display:grid;grid-template-columns:21px 494px;margin-bottom:8.5px}
.detail li::before{grid-row:1/9;margin-top:8px}
.detail p{grid-column:2;text-align:justify;text-align-last:justify;letter-spacing:.3px}
.detail p.end{text-align-last:left;white-space:nowrap}
.short p:first-child{width:492px}
.short p.end{letter-spacing:.4px}
.detail p.kpi{letter-spacing:.11px}
.ach{margin:-1px 0 0 -1px;letter-spacing:.6px}
.detail .ach-list{padding-top:10px}

/* taskbar */
.taskbar{height:72px;flex:none;background:linear-gradient(90deg,#12244a,#142747);border-top:2px solid #3c4a64;padding-bottom:2px;display:flex;align-items:center;color:#fff;font-size:17.5px;line-height:24px}
.weather{width:466px;height:70px;position:relative;display:flex;padding:10px 0 0 33px}
.badge{position:absolute;left:46px;top:8px;width:24px;height:24px;border-radius:50%;background:#c42b1c;text-align:center;line-height:23px;font-size:16px}
.wtext{margin-left:3px;letter-spacing:-.2px}
.wtext .sub{color:#c5cad5}
.search{margin-left:22px;width:326px;height:44px;border-radius:22px;background:#f1f2f5;display:flex;align-items:center;padding-left:15px;font-size:20px;color:#5a5a5a;letter-spacing:-.35px;line-height:43px}
.search span{margin-left:16px}
.apps{display:flex;margin-left:5px;height:70px;align-items:center}
.app{width:60px;height:60px;margin:0 3px;border-radius:6px;display:flex;flex-direction:column;align-items:center;justify-content:center;position:relative}
.app.active{background:#25365a;border:1px solid #334366}
.app b{position:absolute;bottom:0;left:25px;width:10px;height:5px;border-radius:3px;background:#9aa3b5}
.active::after{content:"";position:absolute;bottom:-1px;left:17px;width:24px;height:5px;border-radius:3px;background:#4cc2ff}
.tray{margin-left:19px;display:flex;align-items:center}
.tslot{width:36px;display:flex;justify-content:center}
.tslot.wide{width:48px}
.lang{width:66px;margin-right:6px;text-align:center;letter-spacing:-.5px;margin-top:-2px}
.clock{width:112px;text-align:right;letter-spacing:-.5px;margin-top:-2px}
.date{letter-spacing:-.1px}
.bell{margin-left:13px}
```
